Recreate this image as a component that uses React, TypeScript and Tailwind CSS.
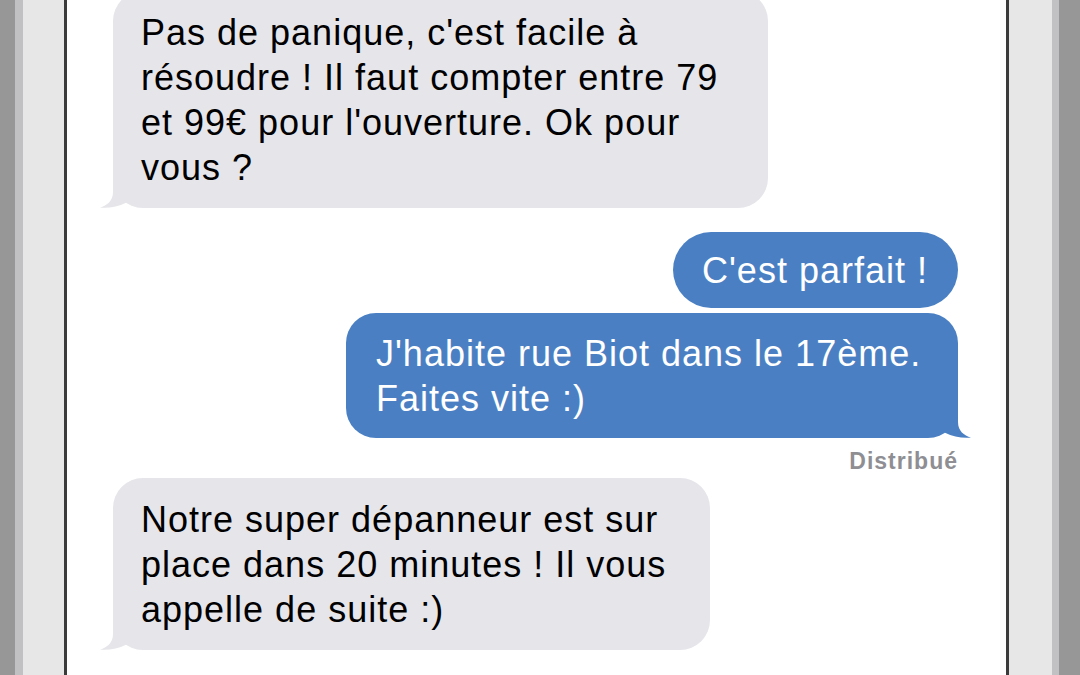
import React from "react";

const GRAY = "#e5e5ea";
const BLUE = "#4a80c3";

function Tail({ side, color }: { side: "left" | "right"; color: string }) {
  return (
    <svg
      width="30"
      height="40"
      viewBox="0 0 30 40"
      className={
        side === "left"
          ? "absolute bottom-0 left-[-14px]"
          : "absolute bottom-0 right-[-14px] -scale-x-100"
      }
    >
      <path
        d="M14 0 L14 24 C14 33 8 37.5 1 39.6 C10 40.5 19 38.5 27 34.7 L27 0 Z"
        fill={color}
      />
    </svg>
  );
}

function Bubble({
  lines,
  mine,
  width,
  tail,
  className = "",
}: {
  lines: string[];
  mine?: boolean;
  width: string;
  tail?: boolean;
  className?: string;
}) {
  return (
    <div
      className={`relative ${width} ${
        mine ? "self-end bg-[#4a80c3] text-white" : "self-start bg-[#e5e5ea] text-black"
      } ${className}`}
    >
      <div className="whitespace-nowrap text-[36px] leading-[45px] tracking-[1px]">
        {lines.map((l) => (
          <div key={l}>{l}</div>
        ))}
      </div>
      {tail && <Tail side={mine ? "right" : "left"} color={mine ? BLUE : GRAY} />}
    </div>
  );
}

function Bezel({ right }: { right?: boolean }) {
  const strips = [
    <div key="a" className={right ? "w-[21px] bg-[#979797]" : "w-[15px] bg-[#979797]"} />,
    <div key="b" className={right ? "w-[7px] bg-[#c1c1c3]" : "w-[8px] bg-[#c1c1c3]"} />,
    <div key="c" className={right ? "w-[43px] bg-[#e7e7e7]" : "w-[41px] bg-[#e7e7e7]"} />,
    <div key="d" className="w-[3px] bg-[#3b3b3b]" />,
  ];
  return <div className="flex h-full shrink-0">{right ? strips.reverse() : strips}</div>;
}

export default function App() {
  return (
    <div
      className="flex h-[675px] w-[1080px] overflow-hidden bg-white"
      style={{ fontFamily: '"Liberation Sans", Arial, sans-serif' }}
    >
      <Bezel />
      <div className="flex flex-1 flex-col pl-[46px] pr-[48px]">
        <Bubble
          width="w-[655px]"
          tail
          className="mt-[-9px] rounded-[30px] pb-[18px] pl-[28px] pt-[19px]"
          lines={[
            "Pas de panique, c'est facile à",
            "résoudre ! Il faut compter entre 79",
            "et 99€ pour l'ouverture. Ok pour",
            "vous ?",
          ]}
        />
        <Bubble
          mine
          width="w-[285px]"
          className="mt-[24px] rounded-[38px] pb-[15px] pl-[29px] pt-[16px]"
          lines={["C'est parfait !"]}
        />
        <Bubble
          mine
          tail
          width="w-[612px]"
          className="mt-[5px] rounded-[30px] pb-[17px] pl-[30px] pt-[18px]"
          lines={["J'habite rue Biot dans le 17ème.", "Faites vite :)"]}
        />
        <div className="mt-[9px] self-end text-[23px] font-bold leading-[28px] tracking-[1px] text-[#8e8e93]">
          Distribué
        </div>
        <Bubble
          width="w-[597px]"
          tail
          className="mt-[3px] rounded-[30px] pb-[18px] pl-[28px] pt-[19px]"
          lines={[
            "Notre super dépanneur est sur",
            "place dans 20 minutes ! Il vous",
            "appelle de suite :)",
          ]}
        />
      </div>
      <Bezel right />
    </div>
  );
}
